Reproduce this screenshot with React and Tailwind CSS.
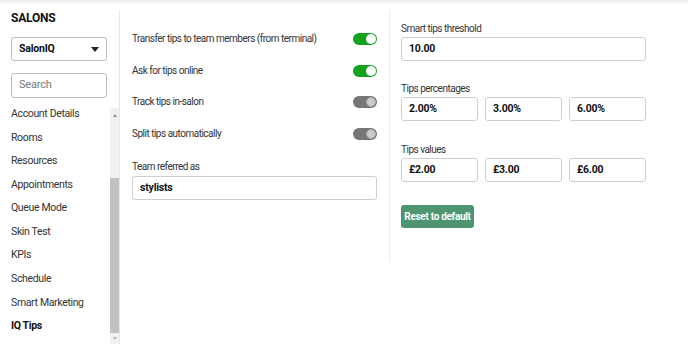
import React from "react";

const MENU = [
  "Account Details",
  "Rooms",
  "Resources",
  "Appointments",
  "Queue Mode",
  "Skin Test",
  "KPIs",
  "Schedule",
  "Smart Marketing",
  "IQ Tips",
];

const TOGGLES = [
  { label: "Transfer tips to team members (from terminal)", on: true },
  { label: "Ask for tips online", on: true },
  { label: "Track tips in-salon", on: false },
  { label: "Split tips automatically", on: false },
];

const Toggle = ({ on }) => (
  <div
    className={`w-[24px] h-[12px] rounded-full flex items-center justify-end pr-[1px] ${
      on ? "bg-[#16a11c]" : "bg-[#767676]"
    }`}
  >
    <div
      className={`w-[10px] h-[10px] rounded-full ${
        on ? "bg-white" : "bg-[#c9c9c9] border border-[#a9a9a9]"
      }`}
    />
  </div>
);

const Field = ({ value, className = "" }) => (
  <div
    className={`h-[24px] border border-[#cfcfcf] rounded-[3px] flex items-center pl-[7px] text-[10.5px] font-bold tracking-[-0.2px] text-[#111] ${className}`}
  >
    {value}
  </div>
);

const Label = ({ children, className = "" }) => (
  <div className={`text-[10px] leading-[14px] tracking-[-0.5px] text-[#333] whitespace-nowrap ${className}`}>
    {children}
  </div>
);

const App = () => {
  return (
    <div className="w-[688px] h-[344px] overflow-hidden bg-white font-['Roboto',sans-serif] text-[#333]">
      {/* top shadow strip */}
      <div className="h-[4px] bg-gradient-to-b from-[#ebebeb] to-white" />

      <div className="flex h-[340px]">
        {/* Sidebar */}
        <aside className="w-[119px] flex flex-col">
          <div className="pl-[11px] pt-[6px] pr-[12px]">
            <div className="text-[12px] leading-[16px] font-bold tracking-[-0.2px] text-[#111]">SALONS</div>
            <div className="mt-[11px] h-[24px] border border-[#bdbdbd] rounded-[3px] flex items-center justify-between pl-[7px] pr-[7px]">
              <span className="text-[10.5px] font-bold tracking-[-0.2px] text-[#111]">SalonIQ</span>
              <span className="w-0 h-0 border-l-[4px] border-r-[4px] border-t-[5px] border-l-transparent border-r-transparent border-t-[#222]" />
            </div>
            <div className="mt-[12px] h-[25px] border border-[#bdbdbd] rounded-[3px] flex items-center pl-[7px]">
              <span className="text-[11px] tracking-[-0.2px] text-[#777]">Search</span>
            </div>
          </div>

          <div className="mt-[8px] flex-1 flex overflow-hidden">
            <div className="flex-1 overflow-hidden">
              <div className="-mt-[4px] pl-[11px]">
                {MENU.map((item) => (
                  <div
                    key={item}
                    className={`h-[23.6px] flex items-center text-[10.5px] tracking-[-0.35px] whitespace-nowrap ${
                      item === "IQ Tips" ? "font-bold text-[#111]" : "text-[#333]"
                    }`}
                  >
                    {item}
                  </div>
                ))}
              </div>
            </div>
            {/* scrollbar */}
            <div className="w-[9px] mt-[2px] bg-[#f1f1f1] flex flex-col items-center">
              <div className="h-[14px] flex items-center justify-center">
                <span className="w-0 h-0 border-l-[2px] border-r-[2px] border-b-[3px] border-l-transparent border-r-transparent border-b-[#8a8a8a]" />
              </div>
              <div className="h-[56px]" />
              <div className="w-full h-[155px] bg-[#c1c1c1]" />
              <div className="flex-1 flex items-center justify-center">
                <span className="w-0 h-0 border-l-[2px] border-r-[2px] border-t-[3px] border-l-transparent border-r-transparent border-t-[#b5b5b5]" />
              </div>
            </div>
          </div>
        </aside>

        <div className="w-px bg-[#e6e6e6] mt-[6px]" />

        {/* Left settings column */}
        <section className="w-[269px] px-[12px] pt-[19px]">
          {TOGGLES.map((t) => (
            <div key={t.label} className="h-[31.7px] flex items-center justify-between">
              <Label>{t.label}</Label>
              <Toggle on={t.on} />
            </div>
          ))}
          <Label className="mt-[10px]">Team referred as</Label>
          <Field value="stylists" className="mt-[2px] pl-[6px]" />
        </section>

        <div className="w-px bg-[#ececec] mt-[6px] h-[252px]" />

        {/* Right settings column */}
        <section className="flex-1 pl-[11px] pt-[18px]">
          <div className="w-[245px]">
            <Label>Smart tips threshold</Label>
            <Field value="10.00" className="mt-[1px]" />

            <Label className="mt-[21px]">Tips percentages</Label>
            <div className="mt-[1px] grid grid-cols-3 gap-[7px]">
              <Field value="2.00%" />
              <Field value="3.00%" />
              <Field value="6.00%" />
            </div>

            <Label className="mt-[22px]">Tips values</Label>
            <div className="mt-[1px] grid grid-cols-3 gap-[7px]">
              <Field value="£2.00" />
              <Field value="£3.00" />
              <Field value="£6.00" />
            </div>

            <button className="mt-[23px] h-[23px] w-[73px] rounded-[3px] bg-[#4e9571] text-white text-[10px] tracking-[-0.3px] font-bold flex items-center justify-center">
              Reset to default
            </button>
          </div>
        </section>
      </div>
    </div>
  );
};

export default App;
